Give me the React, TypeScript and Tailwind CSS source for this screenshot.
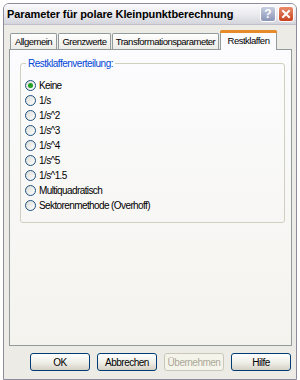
import React from 'react';

const options = [
  'Keine',
  '1/s',
  '1/s^2',
  '1/s^3',
  '1/s^4',
  '1/s^5',
  '1/s^1.5',
  'Multiquadratisch',
  'Sektorenmethode (Overhoff)',
];

const tabs = [
  { label: 'Allgemein', w: 'w-[47px]' },
  { label: 'Grenzwerte', w: 'w-[53px]' },
  { label: 'Transformationsparameter', w: 'w-[107px]' },
];

const Radio = ({ checked, label }: { checked?: boolean; label: string }) => (
  <div className="flex items-center h-[15px]">
    <span className="w-[11px] h-[11px] rounded-full border border-[#1c5180] bg-gradient-to-br from-[#dcdcd7] to-white flex items-center justify-center">
      {checked && <span className="w-[5px] h-[5px] rounded-full bg-[#21a121]" />}
    </span>
    <span className="ml-[3px] text-[10px] tracking-[-0.6px] text-black">{label}</span>
  </div>
);

const Button = ({ label, disabled }: { label: string; disabled?: boolean }) => (
  <div
    className={
      disabled
        ? 'w-[60px] h-[18px] rounded-[3px] border border-[#c9c7ba] bg-[#f5f4ea] flex items-center justify-center text-[10px] tracking-[-0.5px] text-[#aca899]'
        : 'w-[60px] h-[18px] rounded-[3px] border border-[#003c74] bg-gradient-to-b from-white via-[#f0f0ea] to-[#d6d0c5] flex items-center justify-center text-[10px] tracking-[-0.5px] text-black'
    }
  >
    {label}
  </div>
);

export default function App() {
  return (
    <div
      className="w-[300px] h-[380px] bg-white overflow-hidden pl-[3px] pt-[3px]"
      style={{ fontFamily: '"Liberation Sans", Arial, sans-serif' }}
    >
      <div className="w-[294px] h-[377px] rounded-t-[6px] border border-[#8c8c9c] bg-[#ecebe6] flex flex-col">
        {/* title bar */}
        <div className="h-[21px] rounded-t-[5px] bg-gradient-to-b from-[#fbfbfd] via-[#ebebf0] to-[#d4d4dc] flex items-center pl-[3px] pr-[2px] border-b border-[#c0c0cc]">
          <span className="text-[11px] font-bold text-black flex-1 tracking-[-0.1px]">
            Parameter für polare Kleinpunktberechnung
          </span>
          <div className="w-[16px] h-[16px] rounded-[3px] border border-white bg-gradient-to-b from-[#c8cfe0] to-[#8a94b6] flex items-center justify-center text-white text-[12px] font-bold leading-none">
            ?
          </div>
          <div className="ml-[2px] w-[16px] h-[16px] rounded-[3px] border border-white bg-gradient-to-b from-[#e98a6a] to-[#c8401c] flex items-center justify-center">
            <svg width="10" height="10" viewBox="0 0 10 10">
              <path d="M2 2 L8 8 M8 2 L2 8" stroke="white" strokeWidth="2" strokeLinecap="square" />
            </svg>
          </div>
        </div>

        {/* body */}
        <div className="flex-1 flex flex-col pl-[5px] pr-[4px] pt-[5px]">
          <div className="flex items-end h-[19px] pl-[1px] text-[9.5px] tracking-[-0.5px]">
            {tabs.map((t) => (
              <div
                key={t.label}
                className={`${t.w} h-[16px] mr-[1px] border border-b-0 border-[#919b9c] rounded-t-[2px] bg-gradient-to-b from-white to-[#ecebe6] leading-[15px] text-black text-center whitespace-nowrap`}
              >
                {t.label}
              </div>
            ))}
            <div className="relative w-[57px] h-[19px] -mb-[1px] border-x border-[#919b9c] bg-[#fcfcfe] leading-[19px] text-black text-center z-10">
              <div className="absolute -top-[1px] -left-[1px] -right-[1px] h-[3px] rounded-t-[2px] bg-[#e68b2c] border-t border-[#e68b2c]" />
              Restklaffen
            </div>
          </div>
          <div className="h-[297px] border border-[#919b9c] bg-gradient-to-b from-[#fcfcfe] to-[#f4f3ee] pl-[10px] pr-[6px] pt-[13px]">
            <div className="relative h-[160px] border border-[#d0d0bf] rounded-[3px] pl-[4px] pt-[14px]">
              <span className="absolute -top-[7px] left-[5px] px-[2px] bg-[#fcfcfe] text-[10px] tracking-[-0.5px] text-[#0046d5] leading-[13px]">
                Restklaffenverteilung:
              </span>
              {options.map((o, i) => (
                <Radio key={o} label={o} checked={i === 0} />
              ))}
            </div>
          </div>
          <div className="flex justify-end gap-[7px] pt-[7px] pr-[1px]">
            <Button label="OK" />
            <Button label="Abbrechen" />
            <Button label="Übernehmen" disabled />
            <Button label="Hilfe" />
          </div>
        </div>
      </div>
    </div>
  );
}
